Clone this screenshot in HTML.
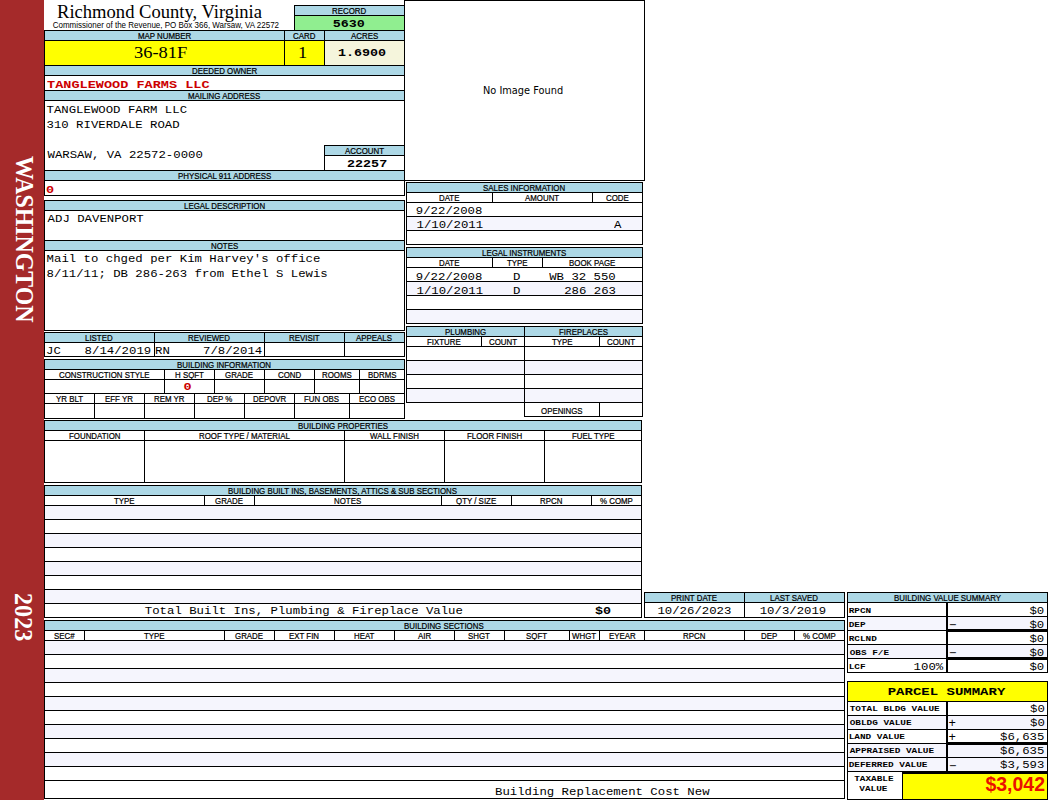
<!DOCTYPE html>
<html lang="en"><head><meta charset="utf-8"><title>Richmond County, Virginia</title>
<style>
html,body{margin:0;padding:0;background:#fff}
body{width:1050px;height:800px;position:relative;overflow:hidden;font-family:"Liberation Sans",sans-serif;color:#000}
.b{position:absolute}
.t{position:absolute;white-space:nowrap;transform-origin:0 0;line-height:16px}
.h{font-family:"Liberation Sans",sans-serif;font-size:8px;-webkit-text-stroke:0.2px #000;transform:scale(0.985,1.15)}
.d{font-family:"Liberation Mono",monospace;font-size:12.33px;transform:scale(1,0.87)}
.db{font-family:"Liberation Mono",monospace;font-weight:bold;font-size:13.4px;transform:scale(1,0.83)}
.own{font-family:"Liberation Mono",monospace;font-weight:bold;font-size:13.55px;color:#cc0000;transform:scale(1,0.83)}
.sg{font-family:"Liberation Mono",monospace;font-size:12.33px}
.big{font-family:"Liberation Serif",serif;font-size:17.4px;line-height:22px;transform:scaleX(1.06)}
.title{font-family:"Liberation Serif",serif;font-size:17.8px;line-height:20px;transform:scaleX(1.045)}
.sub{font-family:"Liberation Sans",sans-serif;font-size:8px;line-height:10px;transform:scale(1,1.05)}
.img{font-family:"DejaVu Sans","Liberation Sans",sans-serif;font-size:11px;transform:scaleX(0.89)}
.lb{font-family:"Liberation Mono",monospace;font-weight:bold;font-size:9.4px;line-height:12px;transform:scale(1,0.85)}
.ps{font-family:"Liberation Mono",monospace;font-weight:bold;font-size:14px;transform:scale(1,0.84)}
.tax{font-family:"Liberation Sans",sans-serif;font-weight:bold;font-size:19.5px;line-height:22px;color:#ea1000}
.side{position:absolute;color:#fff;font:bold 23px "Liberation Serif",serif;line-height:24px;white-space:nowrap;transform-origin:0 0}
.s1{transform:translate(12px,0) rotate(90deg) scale(1.036,1.1)}
.s2{transform:translate(12px,0) rotate(90deg) scale(1.05,1.1)}
</style></head>
<body>
<div class="b" style="left:0px;top:0px;width:44px;height:800px;background:#a52a2a"></div>
<div class="b" style="left:404px;top:0px;width:241px;height:181px;background:#000"></div>
<div class="b" style="left:405px;top:1px;width:239px;height:179px;background:#ffffff"></div>
<div class="b" style="left:294px;top:5px;width:111px;height:26px;background:#000"></div>
<div class="b" style="left:295px;top:6px;width:109px;height:9px;background:#add8e6"></div>
<div class="b" style="left:295px;top:16px;width:109px;height:14px;background:#90ee90"></div>
<div class="b" style="left:44px;top:30px;width:361px;height:166px;background:#000"></div>
<div class="b" style="left:45px;top:31px;width:239px;height:9px;background:#add8e6"></div>
<div class="b" style="left:285px;top:31px;width:39px;height:9px;background:#add8e6"></div>
<div class="b" style="left:325px;top:31px;width:79px;height:9px;background:#add8e6"></div>
<div class="b" style="left:45px;top:41px;width:239px;height:24px;background:#ffff00"></div>
<div class="b" style="left:285px;top:41px;width:39px;height:24px;background:#ffff00"></div>
<div class="b" style="left:325px;top:41px;width:79px;height:24px;background:#f5f5dc"></div>
<div class="b" style="left:45px;top:66px;width:359px;height:9px;background:#add8e6"></div>
<div class="b" style="left:45px;top:76px;width:359px;height:14px;background:#ffffff"></div>
<div class="b" style="left:45px;top:91px;width:359px;height:9px;background:#add8e6"></div>
<div class="b" style="left:45px;top:101px;width:359px;height:69px;background:#ffffff"></div>
<div class="b" style="left:324px;top:145px;width:81px;height:26px;background:#000"></div>
<div class="b" style="left:325px;top:146px;width:79px;height:9px;background:#add8e6"></div>
<div class="b" style="left:325px;top:156px;width:79px;height:14px;background:#ffffff"></div>
<div class="b" style="left:45px;top:171px;width:359px;height:9px;background:#add8e6"></div>
<div class="b" style="left:45px;top:181px;width:359px;height:14px;background:#ffffff"></div>
<div class="b" style="left:44px;top:200px;width:361px;height:131px;background:#000"></div>
<div class="b" style="left:45px;top:201px;width:359px;height:9px;background:#add8e6"></div>
<div class="b" style="left:45px;top:211px;width:359px;height:29px;background:#ffffff"></div>
<div class="b" style="left:45px;top:241px;width:359px;height:9px;background:#add8e6"></div>
<div class="b" style="left:45px;top:251px;width:359px;height:79px;background:#ffffff"></div>
<div class="b" style="left:44px;top:332px;width:361px;height:25px;background:#000"></div>
<div class="b" style="left:45px;top:333px;width:109px;height:9px;background:#add8e6"></div>
<div class="b" style="left:155px;top:333px;width:109px;height:9px;background:#add8e6"></div>
<div class="b" style="left:265px;top:333px;width:79px;height:9px;background:#add8e6"></div>
<div class="b" style="left:345px;top:333px;width:59px;height:9px;background:#add8e6"></div>
<div class="b" style="left:45px;top:343px;width:109px;height:13px;background:#ffffff"></div>
<div class="b" style="left:155px;top:343px;width:109px;height:13px;background:#ffffff"></div>
<div class="b" style="left:265px;top:343px;width:79px;height:13px;background:#ffffff"></div>
<div class="b" style="left:345px;top:343px;width:59px;height:13px;background:#ffffff"></div>
<div class="b" style="left:44px;top:359px;width:361px;height:60px;background:#000"></div>
<div class="b" style="left:45px;top:360px;width:359px;height:9px;background:#add8e6"></div>
<div class="b" style="left:45px;top:370px;width:119px;height:9px;background:#ffffff"></div>
<div class="b" style="left:165px;top:370px;width:49px;height:9px;background:#ffffff"></div>
<div class="b" style="left:215px;top:370px;width:49px;height:9px;background:#ffffff"></div>
<div class="b" style="left:265px;top:370px;width:49px;height:9px;background:#ffffff"></div>
<div class="b" style="left:315px;top:370px;width:44px;height:9px;background:#ffffff"></div>
<div class="b" style="left:360px;top:370px;width:44px;height:9px;background:#ffffff"></div>
<div class="b" style="left:45px;top:380px;width:119px;height:13px;background:#ffffff"></div>
<div class="b" style="left:165px;top:380px;width:49px;height:13px;background:#ffffff"></div>
<div class="b" style="left:215px;top:380px;width:49px;height:13px;background:#ffffff"></div>
<div class="b" style="left:265px;top:380px;width:49px;height:13px;background:#ffffff"></div>
<div class="b" style="left:315px;top:380px;width:44px;height:13px;background:#ffffff"></div>
<div class="b" style="left:360px;top:380px;width:44px;height:13px;background:#ffffff"></div>
<div class="b" style="left:45px;top:394px;width:49px;height:9px;background:#ffffff"></div>
<div class="b" style="left:95px;top:394px;width:49px;height:9px;background:#ffffff"></div>
<div class="b" style="left:145px;top:394px;width:49px;height:9px;background:#ffffff"></div>
<div class="b" style="left:195px;top:394px;width:49px;height:9px;background:#ffffff"></div>
<div class="b" style="left:245px;top:394px;width:49px;height:9px;background:#ffffff"></div>
<div class="b" style="left:295px;top:394px;width:54px;height:9px;background:#ffffff"></div>
<div class="b" style="left:350px;top:394px;width:54px;height:9px;background:#ffffff"></div>
<div class="b" style="left:45px;top:404px;width:49px;height:14px;background:#ffffff"></div>
<div class="b" style="left:95px;top:404px;width:49px;height:14px;background:#ffffff"></div>
<div class="b" style="left:145px;top:404px;width:49px;height:14px;background:#ffffff"></div>
<div class="b" style="left:195px;top:404px;width:49px;height:14px;background:#ffffff"></div>
<div class="b" style="left:245px;top:404px;width:49px;height:14px;background:#ffffff"></div>
<div class="b" style="left:295px;top:404px;width:54px;height:14px;background:#ffffff"></div>
<div class="b" style="left:350px;top:404px;width:54px;height:14px;background:#ffffff"></div>
<div class="b" style="left:44px;top:420px;width:598px;height:63px;background:#000"></div>
<div class="b" style="left:45px;top:421px;width:596px;height:9px;background:#add8e6"></div>
<div class="b" style="left:45px;top:431px;width:99px;height:9px;background:#ffffff"></div>
<div class="b" style="left:145px;top:431px;width:199px;height:9px;background:#ffffff"></div>
<div class="b" style="left:345px;top:431px;width:99px;height:9px;background:#ffffff"></div>
<div class="b" style="left:445px;top:431px;width:99px;height:9px;background:#ffffff"></div>
<div class="b" style="left:545px;top:431px;width:96px;height:9px;background:#ffffff"></div>
<div class="b" style="left:45px;top:441px;width:99px;height:41px;background:#ffffff"></div>
<div class="b" style="left:145px;top:441px;width:199px;height:41px;background:#ffffff"></div>
<div class="b" style="left:345px;top:441px;width:99px;height:41px;background:#ffffff"></div>
<div class="b" style="left:445px;top:441px;width:99px;height:41px;background:#ffffff"></div>
<div class="b" style="left:545px;top:441px;width:96px;height:41px;background:#ffffff"></div>
<div class="b" style="left:44px;top:485px;width:598px;height:133px;background:#000"></div>
<div class="b" style="left:45px;top:486px;width:596px;height:9px;background:#add8e6"></div>
<div class="b" style="left:45px;top:496px;width:159px;height:9px;background:#ffffff"></div>
<div class="b" style="left:205px;top:496px;width:49px;height:9px;background:#ffffff"></div>
<div class="b" style="left:255px;top:496px;width:186px;height:9px;background:#ffffff"></div>
<div class="b" style="left:442px;top:496px;width:69px;height:9px;background:#ffffff"></div>
<div class="b" style="left:512px;top:496px;width:79px;height:9px;background:#ffffff"></div>
<div class="b" style="left:592px;top:496px;width:49px;height:9px;background:#ffffff"></div>
<div class="b" style="left:45px;top:506px;width:596px;height:13px;background:#f5f5fd"></div>
<div class="b" style="left:45px;top:520px;width:596px;height:13px;background:#ffffff"></div>
<div class="b" style="left:45px;top:534px;width:596px;height:13px;background:#f5f5fd"></div>
<div class="b" style="left:45px;top:548px;width:596px;height:13px;background:#ffffff"></div>
<div class="b" style="left:45px;top:562px;width:596px;height:13px;background:#f5f5fd"></div>
<div class="b" style="left:45px;top:576px;width:596px;height:13px;background:#ffffff"></div>
<div class="b" style="left:45px;top:590px;width:596px;height:13px;background:#f5f5fd"></div>
<div class="b" style="left:45px;top:604px;width:596px;height:13px;background:#ffffff"></div>
<div class="b" style="left:44px;top:620px;width:801px;height:179px;background:#000"></div>
<div class="b" style="left:45px;top:621px;width:799px;height:9px;background:#add8e6"></div>
<div class="b" style="left:45px;top:631px;width:39px;height:9px;background:#ffffff"></div>
<div class="b" style="left:85px;top:631px;width:139px;height:9px;background:#ffffff"></div>
<div class="b" style="left:225px;top:631px;width:49px;height:9px;background:#ffffff"></div>
<div class="b" style="left:275px;top:631px;width:59px;height:9px;background:#ffffff"></div>
<div class="b" style="left:335px;top:631px;width:59px;height:9px;background:#ffffff"></div>
<div class="b" style="left:395px;top:631px;width:59px;height:9px;background:#ffffff"></div>
<div class="b" style="left:455px;top:631px;width:49px;height:9px;background:#ffffff"></div>
<div class="b" style="left:505px;top:631px;width:64px;height:9px;background:#ffffff"></div>
<div class="b" style="left:570px;top:631px;width:29px;height:9px;background:#ffffff"></div>
<div class="b" style="left:600px;top:631px;width:44px;height:9px;background:#ffffff"></div>
<div class="b" style="left:645px;top:631px;width:99px;height:9px;background:#ffffff"></div>
<div class="b" style="left:745px;top:631px;width:49px;height:9px;background:#ffffff"></div>
<div class="b" style="left:795px;top:631px;width:49px;height:9px;background:#ffffff"></div>
<div class="b" style="left:45px;top:641px;width:799px;height:13px;background:#f5f5fd"></div>
<div class="b" style="left:45px;top:655px;width:799px;height:13px;background:#ffffff"></div>
<div class="b" style="left:45px;top:669px;width:799px;height:13px;background:#f5f5fd"></div>
<div class="b" style="left:45px;top:683px;width:799px;height:13px;background:#ffffff"></div>
<div class="b" style="left:45px;top:697px;width:799px;height:13px;background:#f5f5fd"></div>
<div class="b" style="left:45px;top:711px;width:799px;height:13px;background:#ffffff"></div>
<div class="b" style="left:45px;top:725px;width:799px;height:13px;background:#f5f5fd"></div>
<div class="b" style="left:45px;top:739px;width:799px;height:13px;background:#ffffff"></div>
<div class="b" style="left:45px;top:753px;width:799px;height:13px;background:#f5f5fd"></div>
<div class="b" style="left:45px;top:767px;width:799px;height:13px;background:#ffffff"></div>
<div class="b" style="left:45px;top:781px;width:799px;height:17px;background:#ffffff"></div>
<div class="b" style="left:406px;top:182px;width:237px;height:63px;background:#000"></div>
<div class="b" style="left:407px;top:183px;width:235px;height:9px;background:#add8e6"></div>
<div class="b" style="left:407px;top:193px;width:85px;height:9px;background:#ffffff"></div>
<div class="b" style="left:493px;top:193px;width:99px;height:9px;background:#ffffff"></div>
<div class="b" style="left:593px;top:193px;width:49px;height:9px;background:#ffffff"></div>
<div class="b" style="left:407px;top:203px;width:235px;height:13px;background:#ffffff"></div>
<div class="b" style="left:407px;top:217px;width:235px;height:13px;background:#f5f5fd"></div>
<div class="b" style="left:407px;top:231px;width:235px;height:13px;background:#ffffff"></div>
<div class="b" style="left:406px;top:247px;width:237px;height:77px;background:#000"></div>
<div class="b" style="left:407px;top:248px;width:235px;height:9px;background:#add8e6"></div>
<div class="b" style="left:407px;top:258px;width:85px;height:9px;background:#ffffff"></div>
<div class="b" style="left:493px;top:258px;width:49px;height:9px;background:#ffffff"></div>
<div class="b" style="left:543px;top:258px;width:99px;height:9px;background:#ffffff"></div>
<div class="b" style="left:407px;top:268px;width:235px;height:13px;background:#ffffff"></div>
<div class="b" style="left:407px;top:282px;width:235px;height:13px;background:#f5f5fd"></div>
<div class="b" style="left:407px;top:296px;width:235px;height:13px;background:#ffffff"></div>
<div class="b" style="left:407px;top:310px;width:235px;height:13px;background:#f5f5fd"></div>
<div class="b" style="left:406px;top:326px;width:237px;height:77px;background:#000"></div>
<div class="b" style="left:524px;top:402px;width:119px;height:15px;background:#000"></div>
<div class="b" style="left:407px;top:327px;width:117px;height:9px;background:#add8e6"></div>
<div class="b" style="left:525px;top:327px;width:117px;height:9px;background:#add8e6"></div>
<div class="b" style="left:407px;top:337px;width:74px;height:9px;background:#ffffff"></div>
<div class="b" style="left:482px;top:337px;width:42px;height:9px;background:#ffffff"></div>
<div class="b" style="left:525px;top:337px;width:74px;height:9px;background:#ffffff"></div>
<div class="b" style="left:600px;top:337px;width:42px;height:9px;background:#ffffff"></div>
<div class="b" style="left:407px;top:347px;width:117px;height:13px;background:#ffffff"></div>
<div class="b" style="left:525px;top:347px;width:117px;height:13px;background:#ffffff"></div>
<div class="b" style="left:407px;top:361px;width:117px;height:13px;background:#f5f5fd"></div>
<div class="b" style="left:525px;top:361px;width:117px;height:13px;background:#f5f5fd"></div>
<div class="b" style="left:407px;top:375px;width:117px;height:13px;background:#ffffff"></div>
<div class="b" style="left:525px;top:375px;width:117px;height:13px;background:#ffffff"></div>
<div class="b" style="left:407px;top:389px;width:117px;height:13px;background:#f5f5fd"></div>
<div class="b" style="left:525px;top:389px;width:117px;height:13px;background:#f5f5fd"></div>
<div class="b" style="left:525px;top:403px;width:74px;height:13px;background:#ffffff"></div>
<div class="b" style="left:600px;top:403px;width:42px;height:13px;background:#ffffff"></div>
<div class="b" style="left:644px;top:592px;width:201px;height:26px;background:#000"></div>
<div class="b" style="left:645px;top:593px;width:99px;height:9px;background:#add8e6"></div>
<div class="b" style="left:745px;top:593px;width:99px;height:9px;background:#add8e6"></div>
<div class="b" style="left:645px;top:603px;width:99px;height:14px;background:#ffffff"></div>
<div class="b" style="left:745px;top:603px;width:99px;height:14px;background:#ffffff"></div>
<div class="b" style="left:847px;top:592px;width:201px;height:81px;background:#000"></div>
<div class="b" style="left:848px;top:593px;width:199px;height:9px;background:#add8e6"></div>
<div class="b" style="left:848px;top:603px;width:98px;height:13px;background:#ffffff"></div>
<div class="b" style="left:948px;top:603px;width:99px;height:13px;background:#ffffff"></div>
<div class="b" style="left:848px;top:617px;width:98px;height:13px;background:#f5f5fd"></div>
<div class="b" style="left:948px;top:617px;width:99px;height:12px;background:#f5f5fd"></div>
<div class="b" style="left:848px;top:631px;width:98px;height:13px;background:#ffffff"></div>
<div class="b" style="left:948px;top:632px;width:99px;height:12px;background:#ffffff"></div>
<div class="b" style="left:848px;top:645px;width:98px;height:13px;background:#f5f5fd"></div>
<div class="b" style="left:948px;top:645px;width:99px;height:12px;background:#f5f5fd"></div>
<div class="b" style="left:848px;top:659px;width:98px;height:13px;background:#ffffff"></div>
<div class="b" style="left:948px;top:660px;width:99px;height:12px;background:#ffffff"></div>
<div class="b" style="left:847px;top:681px;width:201px;height:119px;background:#000"></div>
<div class="b" style="left:848px;top:682px;width:199px;height:19px;background:#ffff00"></div>
<div class="b" style="left:848px;top:702px;width:98px;height:13px;background:#ffffff"></div>
<div class="b" style="left:948px;top:702px;width:99px;height:13px;background:#ffffff"></div>
<div class="b" style="left:848px;top:716px;width:98px;height:13px;background:#f5f5fd"></div>
<div class="b" style="left:948px;top:716px;width:99px;height:13px;background:#f5f5fd"></div>
<div class="b" style="left:848px;top:730px;width:98px;height:13px;background:#ffffff"></div>
<div class="b" style="left:948px;top:730px;width:99px;height:12px;background:#ffffff"></div>
<div class="b" style="left:848px;top:744px;width:98px;height:13px;background:#f5f5fd"></div>
<div class="b" style="left:948px;top:745px;width:99px;height:12px;background:#f5f5fd"></div>
<div class="b" style="left:848px;top:758px;width:98px;height:13px;background:#f5f5fd"></div>
<div class="b" style="left:948px;top:758px;width:99px;height:13px;background:#f5f5fd"></div>
<div class="b" style="left:848px;top:772px;width:54px;height:27px;background:#ffffff"></div>
<div class="b" style="left:903px;top:774px;width:144px;height:25px;background:#ffff00"></div>
<div class="side s1" style="left:24.7px;top:155.7px">WASHINGTON</div>
<div class="side s2" style="left:24.2px;top:593px">2023</div>
<div class="t title" style="left:57px;top:2px">Richmond County, Virginia</div>
<div class="t sub" style="left:52.7px;top:21px">Commissioner of the Revenue, PO Box 366, Warsaw, VA 22572</div>
<div class="t img" style="left:483.3px;top:83px">No Image Found</div>
<div class="t h" style="left:332.2px;top:2px">RECORD</div>
<div class="t db" style="left:332.7px;top:18px">5630</div>
<div class="t h" style="left:137.7px;top:27px">MAP NUMBER</div>
<div class="t h" style="left:293.2px;top:27px">CARD</div>
<div class="t h" style="left:350.7px;top:27px">ACRES</div>
<div class="t big" style="left:134px;top:41px">36-81F</div>
<div class="t big" style="left:297.7px;top:41px">1</div>
<div class="t db" style="left:337.9px;top:47px">1.6900</div>
<div class="t h" style="left:191.7px;top:62px">DEEDED OWNER</div>
<div class="t own" style="left:47px;top:79px">TANGLEWOOD FARMS LLC</div>
<div class="t h" style="left:188.2px;top:87px">MAILING ADDRESS</div>
<div class="t d" style="left:46.5px;top:103px">TANGLEWOOD FARM LLC</div>
<div class="t d" style="left:46.5px;top:118px">310 RIVERDALE ROAD</div>
<div class="t d" style="left:47.5px;top:148px">WARSAW, VA 22572-0000</div>
<div class="t h" style="left:344.7px;top:142px">ACCOUNT</div>
<div class="t db" style="left:347px;top:158px">22257</div>
<div class="t h" style="left:177.7px;top:167px">PHYSICAL 911 ADDRESS</div>
<div class="t own" style="left:46px;top:184px">0</div>
<div class="t h" style="left:183.7px;top:197px">LEGAL DESCRIPTION</div>
<div class="t d" style="left:47.6px;top:212px">ADJ DAVENPORT</div>
<div class="t h" style="left:210.7px;top:237px">NOTES</div>
<div class="t d" style="left:46.6px;top:252px">Mail to chged per Kim Harvey's office</div>
<div class="t d" style="left:46.6px;top:267px">8/11/11; DB 286-263 from Ethel S Lewis</div>
<div class="t h" style="left:85.2px;top:329px">LISTED</div>
<div class="t h" style="left:188.2px;top:329px">REVIEWED</div>
<div class="t h" style="left:288.7px;top:329px">REVISIT</div>
<div class="t h" style="left:356.2px;top:329px">APPEALS</div>
<div class="t d" style="left:46px;top:344px">JC</div>
<div class="t d" style="left:84.6px;top:344px">8/14/2019</div>
<div class="t d" style="left:155px;top:344px">RN</div>
<div class="t d" style="left:203px;top:344px">7/8/2014</div>
<div class="t h" style="left:177.2px;top:356px">BUILDING INFORMATION</div>
<div class="t h" style="left:59.2px;top:366px">CONSTRUCTION STYLE</div>
<div class="t h" style="left:174.7px;top:366px">H SQFT</div>
<div class="t h" style="left:225.2px;top:366px">GRADE</div>
<div class="t h" style="left:277.7px;top:366px">COND</div>
<div class="t h" style="left:321.7px;top:366px">ROOMS</div>
<div class="t h" style="left:367.7px;top:366px">BDRMS</div>
<div class="t own" style="left:183.5px;top:381px">0</div>
<div class="t h" style="left:55.7px;top:390px">YR BLT</div>
<div class="t h" style="left:105.2px;top:390px">EFF YR</div>
<div class="t h" style="left:154.2px;top:390px">REM YR</div>
<div class="t h" style="left:206.7px;top:390px">DEP %</div>
<div class="t h" style="left:252.7px;top:390px">DEPOVR</div>
<div class="t h" style="left:304.2px;top:390px">FUN OBS</div>
<div class="t h" style="left:358.7px;top:390px">ECO OBS</div>
<div class="t h" style="left:297.7px;top:417px">BUILDING PROPERTIES</div>
<div class="t h" style="left:68.7px;top:427px">FOUNDATION</div>
<div class="t h" style="left:198.7px;top:427px">ROOF TYPE / MATERIAL</div>
<div class="t h" style="left:369.7px;top:427px">WALL FINISH</div>
<div class="t h" style="left:466.7px;top:427px">FLOOR FINISH</div>
<div class="t h" style="left:571.7px;top:427px">FUEL TYPE</div>
<div class="t h" style="left:228.2px;top:482px">BUILDING BUILT INS, BASEMENTS, ATTICS &amp; SUB SECTIONS</div>
<div class="t h" style="left:114.2px;top:492px">TYPE</div>
<div class="t h" style="left:215.2px;top:492px">GRADE</div>
<div class="t h" style="left:334.2px;top:492px">NOTES</div>
<div class="t h" style="left:456.2px;top:492px">QTY / SIZE</div>
<div class="t h" style="left:540.2px;top:492px">RPCN</div>
<div class="t h" style="left:599.7px;top:492px">% COMP</div>
<div class="t d" style="left:144.8px;top:604px">Total Built Ins, Plumbing &amp; Fireplace Value</div>
<div class="t db" style="left:595px;top:605px">$0</div>
<div class="t h" style="left:404.2px;top:617px">BUILDING SECTIONS</div>
<div class="t h" style="left:53.7px;top:627px">SEC#</div>
<div class="t h" style="left:144.2px;top:627px">TYPE</div>
<div class="t h" style="left:235.2px;top:627px">GRADE</div>
<div class="t h" style="left:289.2px;top:627px">EXT FIN</div>
<div class="t h" style="left:354.2px;top:627px">HEAT</div>
<div class="t h" style="left:417.7px;top:627px">AIR</div>
<div class="t h" style="left:468.2px;top:627px">SHGT</div>
<div class="t h" style="left:526.2px;top:627px">SQFT</div>
<div class="t h" style="left:572.2px;top:627px">WHGT</div>
<div class="t h" style="left:608.7px;top:627px">EYEAR</div>
<div class="t h" style="left:683.2px;top:627px">RPCN</div>
<div class="t h" style="left:761.2px;top:627px">DEP</div>
<div class="t h" style="left:802.7px;top:627px">% COMP</div>
<div class="t d" style="left:495px;top:785px">Building Replacement Cost New</div>
<div class="t h" style="left:483.2px;top:179px">SALES INFORMATION</div>
<div class="t h" style="left:439.2px;top:189px">DATE</div>
<div class="t h" style="left:525.2px;top:189px">AMOUNT</div>
<div class="t h" style="left:605.7px;top:189px">CODE</div>
<div class="t d" style="left:415.8px;top:204px">9/22/2008</div>
<div class="t d" style="left:416.5px;top:218px">1/10/2011</div>
<div class="t d" style="left:614.1px;top:218px">A</div>
<div class="t h" style="left:482.2px;top:244px">LEGAL INSTRUMENTS</div>
<div class="t h" style="left:439.2px;top:254px">DATE</div>
<div class="t h" style="left:507.2px;top:254px">TYPE</div>
<div class="t h" style="left:569.2px;top:254px">BOOK PAGE</div>
<div class="t d" style="left:415.8px;top:270px">9/22/2008</div>
<div class="t d" style="left:512.9px;top:270px">D</div>
<div class="t d" style="left:549.2px;top:270px">WB 32 550</div>
<div class="t d" style="left:416.5px;top:284px">1/10/2011</div>
<div class="t d" style="left:512.9px;top:284px">D</div>
<div class="t d" style="left:564.2px;top:284px">286 263</div>
<div class="t h" style="left:444.7px;top:323px">PLUMBING</div>
<div class="t h" style="left:558.7px;top:323px">FIREPLACES</div>
<div class="t h" style="left:426.7px;top:333px">FIXTURE</div>
<div class="t h" style="left:488.7px;top:333px">COUNT</div>
<div class="t h" style="left:551.7px;top:333px">TYPE</div>
<div class="t h" style="left:606.7px;top:333px">COUNT</div>
<div class="t h" style="left:541.2px;top:402px">OPENINGS</div>
<div class="t h" style="left:671.2px;top:589px">PRINT DATE</div>
<div class="t h" style="left:770.2px;top:589px">LAST SAVED</div>
<div class="t d" style="left:657.4px;top:604px">10/26/2023</div>
<div class="t d" style="left:759.7px;top:604px">10/3/2019</div>
<div class="t h" style="left:893.7px;top:589px">BUILDING VALUE SUMMARY</div>
<div class="t lb" style="left:848.7px;top:606px">RPCN</div>
<div class="t d" style="left:1029.4px;top:604px">$0</div>
<div class="t lb" style="left:848.7px;top:620px">DEP</div>
<div class="t d" style="left:1029.4px;top:618px">$0</div>
<div class="t sg" style="left:949px;top:618px">−</div>
<div class="t lb" style="left:848.7px;top:634px">RCLND</div>
<div class="t d" style="left:1029.4px;top:632px">$0</div>
<div class="t lb" style="left:849.7px;top:648px">OBS F/E</div>
<div class="t d" style="left:1029.4px;top:646px">$0</div>
<div class="t sg" style="left:949px;top:646px">−</div>
<div class="t lb" style="left:848.7px;top:662px">LCF</div>
<div class="t d" style="left:1029.4px;top:660px">$0</div>
<div class="t d" style="left:913.6px;top:660px">100%</div>
<div class="t ps" style="left:887.7px;top:685px">PARCEL SUMMARY</div>
<div class="t lb" style="left:849.7px;top:704px">TOTAL BLDG VALUE</div>
<div class="t d" style="left:1030px;top:702px">$0</div>
<div class="t lb" style="left:849.7px;top:718px">OBLDG VALUE</div>
<div class="t d" style="left:1030px;top:716px">$0</div>
<div class="t sg" style="left:948.5px;top:716px">+</div>
<div class="t lb" style="left:848.7px;top:732px">LAND VALUE</div>
<div class="t d" style="left:1000px;top:730px">$6,635</div>
<div class="t sg" style="left:948.5px;top:730px">+</div>
<div class="t lb" style="left:849.7px;top:746px">APPRAISED VALUE</div>
<div class="t d" style="left:1000px;top:744px">$6,635</div>
<div class="t lb" style="left:848.7px;top:760px">DEFERRED VALUE</div>
<div class="t d" style="left:1000px;top:758px">$3,593</div>
<div class="t sg" style="left:949px;top:759px">−</div>
<div class="t lb" style="left:854.2px;top:774px">TAXABLE</div>
<div class="t lb" style="left:859.3px;top:784px">VALUE</div>
<div class="t tax" style="left:985.4px;top:773px">$3,042</div>
</body></html>
